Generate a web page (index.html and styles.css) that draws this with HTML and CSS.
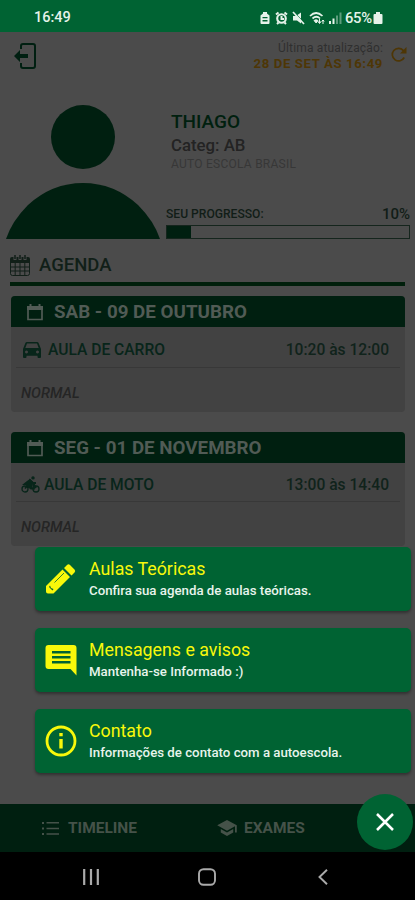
FILE: index.html
```html
<!DOCTYPE html>
<html lang="pt-BR">
<head>
<meta charset="utf-8">
<meta name="viewport" content="width=device-width, initial-scale=1">
<title>Agenda</title>
<link rel="stylesheet" href="styles.css">
</head>
<body>
<div class="phone">
  <div class="status">
    <span class="clock">16:49</span>
    <div class="status-icons">
      <svg width="12" height="14" viewBox="0 0 12 14"><path fill="currentColor" fill-rule="evenodd" d="M4 1h4v1.500l2.500 2V12q0 1-1 1h-7q-1 0-1-1V4.500L4 2.500zM3.500 6v1.300h5V6zm0 3v1.500h5V9z"/></svg>
      <svg width="13" height="14" viewBox="0 0 13 14"><circle cx="6.500" cy="7.500" r="4.300" fill="none" stroke="currentColor" stroke-width="2.100"/><path d="M1 3.500 3.500 1.500M12 3.500 9.500 1.500M2 13l1.500-1.500M11 13l-1.500-1.500M6.500 5v3H9" fill="none" stroke="currentColor" stroke-width="2"/></svg>
      <svg width="13" height="14" viewBox="0 0 13 14"><path fill="currentColor" d="M1 5h3l5-3.500v11L5 9.500H1z"/><path d="m2.500 1.500 10.500 11" stroke="#006333" stroke-width="1"/><path d="m1 1 11 12" stroke="currentColor" stroke-width="1.700"/></svg>
      <svg width="16" height="14" viewBox="0 0 16 14"><path d="M1 5q6-6 12.500 0M3.500 7.500q4-3.500 7.500 0" fill="none" stroke="currentColor" stroke-width="1.700"/><path d="M5 9.500q2-1.500 4 0L7.200 12zM10.500 8v4M9 10.500l1.500 2 1.500-2M14 13V9m-1.300 1.300L14 9l1.300 1.300" fill="currentColor" stroke="currentColor"/></svg>
      <svg width="13" height="14" viewBox="0 0 13 14"><path fill="currentColor" d="M0 10h2v3H0zM3.500 7.500h2V13h-2z"/><path fill="currentColor" opacity=".4" d="M7 4.500h2V13H7zM10.500 1.500h2V13h-2z"/></svg>
      <span class="battery-text">65%</span>
      <svg width="10" height="14" viewBox="0 0 10 14"><path fill="currentColor" d="M3 1h4v2h1.500q1 0 1 1v8q0 1-1 1h-7q-1 0-1-1V4q0-1 1-1H3z"/></svg>
    </div>
  </div>

  <main class="screen">
    <header class="top">
      <svg class="logout" width="24" height="28" viewBox="0 0 24 28"><path d="M7 7V4q0-2 2-2h10q2 0 2 2v20q0 2-2 2H9q-2 0-2-2v-3" fill="none" stroke="currentColor" stroke-width="2"/><path fill="currentColor" d="m0 14 6-6v4h8v4H6v4z"/></svg>
      <div class="update">
        <span class="update-label">Última atualização:</span>
        <span class="update-date">28 DE SET ÀS 16:49</span>
      </div>
      <svg class="refresh" width="18" height="18" viewBox="0 0 18 18"><path d="M14.200 11.500A6.300 6.300 0 1 1 13.200 4.300L15 6" fill="none" stroke="currentColor" stroke-width="1.700"/><path fill="currentColor" d="M16.500 1v6.500H10z"/></svg>
    </header>

    <section class="profile">
      <svg class="avatar" width="154" height="136" viewBox="0 0 154 136"><circle cx="77" cy="33" r="32" fill="currentColor"/><path fill="currentColor" d="M0 135Q6 117 22 101 46 79 77 79t55 22q16 16 22 34z"/></svg>
      <div class="info">
        <div class="identity">
          <h1 class="name">THIAGO</h1>
          <p class="category">Categ: AB</p>
          <p class="school">AUTO ESCOLA BRASIL</p>
        </div>
        <div class="progress-head"><span class="progress-label">SEU PROGRESSO:</span><span class="progress-value">10%</span></div>
        <div class="progress"><div class="progress-fill" style="width:10%"></div></div>
      </div>
    </section>

    <h2 class="agenda">
      <svg width="20" height="21" viewBox="0 0 20 21"><path fill="currentColor" d="M2 2h16q2 0 2 2v4H0V4q0-2 2-2z"/><path d="M.5 7v11.500q0 2 2 2h15q2 0 2-2V7M.5 12h19M.5 16h19M5.200 8v12M10 8v12M14.800 8v12" fill="none" stroke="currentColor"/><path d="M5 1v4M10 1v4M15 1v4" stroke="#4b4b4b" stroke-width="3"/><path d="M5 0v4M10 0v4M15 0v4" stroke="currentColor" stroke-width="1.500"/></svg>
      <span>AGENDA</span>
    </h2>

    <article class="lesson">
      <h3 class="lesson-date">
        <svg width="16" height="18" viewBox="0 0 16 18"><path d="M1 4h14v12.500H1z" fill="none" stroke="currentColor" stroke-width="1.700"/><path fill="currentColor" d="M0 3h16v4H0zM2.500 1h2v3h-2zM11.500 1h2v3h-2z"/></svg>
        <span>SAB - 09 DE OUTUBRO</span>
      </h3>
      <div class="lesson-row">
        <svg class="car" width="18" height="16" viewBox="0 0 18 16"><path fill="currentColor" fill-rule="evenodd" d="M4 0h10q1.300 0 1.700 1.200L18 7v8q0 1-1 1h-1.500q-1 0-1-1v-1.300h-11V15q0 1-1 1H1q-1 0-1-1V7l2.300-5.800Q2.700 0 4 0zm0 1.500L2.300 6h13.400L14 1.500zM3.500 8.500a1.500 1.500 0 1 0 .01 0zm11 0a1.500 1.500 0 1 0 .01 0z"/></svg>
        <span class="lesson-name">AULA DE CARRO</span>
        <span class="lesson-time">10:20 às 12:00</span>
      </div>
      <p class="lesson-type">NORMAL</p>
    </article>

    <article class="lesson second">
      <h3 class="lesson-date">
        <svg width="16" height="18" viewBox="0 0 16 18"><path d="M1 4h14v12.500H1z" fill="none" stroke="currentColor" stroke-width="1.700"/><path fill="currentColor" d="M0 3h16v4H0zM2.500 1h2v3h-2zM11.500 1h2v3h-2z"/></svg>
        <span>SEG - 01 DE NOVEMBRO</span>
      </h3>
      <div class="lesson-row">
        <svg class="moto" width="19" height="17" viewBox="0 0 19 17"><g fill="none" stroke="currentColor"><circle cx="4" cy="13" r="3" stroke-width="1.300"/><circle cx="15" cy="13" r="3" stroke-width="1.300"/><path d="M4 12.500 7 9l3 3.500h3L12 7l3 5M7 9l2-5 3 3h3" stroke-width="1.800"/></g><circle cx="12" cy="1.900" r="1.700" fill="currentColor"/><path fill="currentColor" d="M1 9l5-4 3-2 3 3-1 7-4-1-2-3z"/></svg>
        <span class="lesson-name">AULA DE MOTO</span>
        <span class="lesson-time">13:00 às 14:40</span>
      </div>
      <p class="lesson-type">NORMAL</p>
    </article>
  </main>

  <nav class="tabs">
    <div class="tab timeline">
      <svg width="17" height="13" viewBox="0 0 17 13"><path fill="currentColor" d="M0 0h2v2H0zM4.500 0H17v1.500H4.500zM0 5.500h2v2H0zM4.500 5.700H17v1.500H4.500zM0 11h2v2H0zM4.500 11.300H17v1.500H4.500z"/></svg>
      <span>TIMELINE</span>
    </div>
    <div class="tab exams">
      <svg width="20" height="16" viewBox="0 0 22 18"><path fill="currentColor" d="M4 10.180v4L11 18l7-3.820v-4L11 14zM11 0 0 6l11 6 9-4.910V14h2V6z"/></svg>
      <span>EXAMES</span>
    </div>
  </nav>

  <div class="system-nav">
    <svg width="16" height="16" viewBox="0 0 16 16"><path d="M1.200 0v16M8 0v16M14.800 0v16" stroke="currentColor" stroke-width="2.200"/></svg>
    <svg class="home" width="18" height="18" viewBox="0 0 18 18"><rect x="1" y="1.200" width="16" height="15.600" rx="4.500" fill="none" stroke="currentColor" stroke-width="1.900"/></svg>
    <svg width="10" height="16" viewBox="0 0 10 16"><path d="M9 .8 1.500 8 9 15.200" fill="none" stroke="currentColor" stroke-width="1.900"/></svg>
  </div>

  <div class="menu">
    <a class="option">
      <svg width="32" height="32" viewBox="0 0 32 32"><path fill="currentColor" d="M1 23 17.500 6.500l7.500 7.500L8.500 30.500H3q-2 0-2-2zM19 5l3-3q1.500-1.500 3 0l4.500 4.500q1.500 1.500 0 3l-3 3z"/><path d="m9.500 19.500 9.500-9.500" stroke="#006333" stroke-width=".8"/><path fill="#006333" d="m5 22.500 1 2.500 2.500 1-1 1.500L4 24z"/></svg>
      <div class="option-text"><strong>Aulas Teóricas</strong><span>Confira sua agenda de aulas teóricas.</span></div>
    </a>
    <a class="option">
      <svg width="32" height="32" viewBox="0 0 32 32"><path fill="currentColor" fill-rule="evenodd" d="M3.500 1h25q3 0 3 3v27.500L25.500 25h-22q-3 0-3-3V4q0-3 3-3zM7 7v2.500h18.500V7zm0 5v2.500h18.500V12zm0 5v2.500h18.500V17z"/></svg>
      <div class="option-text"><strong>Mensagens e avisos</strong><span>Mantenha-se Informado :)</span></div>
    </a>
    <a class="option">
      <svg width="32" height="32" viewBox="0 0 32 32"><circle cx="16" cy="16" r="14" fill="none" stroke="currentColor" stroke-width="2.800"/><path fill="currentColor" d="M14.300 8h3.400v3.200h-3.400zM14.300 14h3.400v9.500h-3.400z"/></svg>
      <div class="option-text"><strong>Contato</strong><span>Informações de contato com a autoescola.</span></div>
    </a>
  </div>
  <button class="fab" aria-label="Fechar"><svg width="18" height="18" viewBox="0 0 18 18"><path d="m1 1 16 16M17 1 1 17" stroke="currentColor" stroke-width="2.500"/></svg></button>
</div>
</body>
</html>
```
FILE: styles.css
```css
* { box-sizing: border-box; margin: 0; padding: 0; }
body { font-family: Roboto, "Liberation Sans", sans-serif; background: #4b4b4b; }
svg { display: block; flex: none; }
span, strong { white-space: nowrap; }
.phone { position: relative; width: 415px; height: 900px; overflow: hidden; display: flex; flex-direction: column; background: #4b4b4b; }

.status { height: 32px; flex: none; display: flex; align-items: center; justify-content: space-between; padding: 3px 32px 0 34px; background: #006333; color: #e6f3ea; }
.clock { font-size: 14.5px; font-weight: 500; }
.status-icons { display: flex; align-items: center; gap: 4px; }
.battery-text { font-size: 14.8px; font-weight: 500; letter-spacing: -0.2px; margin: 0 -3px 0 -1px; }

.screen { flex: 1; min-height: 0; overflow: hidden; }
.top { height: 65px; display: flex; align-items: flex-start; padding: 10px 7px 0 14px; }
.logout { color: #001f11; }
.update { margin-left: auto; display: flex; flex-direction: column; align-items: flex-end; color: #2f2f2f; }
.update-label { font-size: 12px; line-height: 13px; letter-spacing: .15px; }
.update-date { font-size: 13.2px; line-height: 17px; font-weight: 700; letter-spacing: .6px; color: #4e3605; }
.refresh { margin: 4px 0 0 7px; color: #4e3605; }

.profile { height: 143px; display: flex; padding: 7px 5px 0 6px; gap: 6px; }
.avatar { color: #001f10; }
.info { flex: 1; display: flex; flex-direction: column; }
.identity { height: 101px; padding: 6px 0 0 5px; }
.name { font-size: 19px; line-height: 24px; font-weight: 500; color: #00200f; }
.category { font-size: 16.8px; line-height: 23px; font-weight: 500; color: #232323; }
.school { font-size: 12px; line-height: 14px; color: #373737; letter-spacing: .25px; }
.progress-head { height: 20px; padding-bottom: 3px; display: flex; justify-content: space-between; align-items: center; color: #111d17; font-weight: 500; }
.progress-label { font-size: 12.1px; }
.progress-value { font-size: 15px; }
.progress { height: 14px; border: 1px solid #15251d; }
.progress-fill { height: 100%; background: #001f10; }

.agenda { height: 46px; margin: 0 10px; padding-top: 8px; border-bottom: 4px solid #001f0b; display: flex; align-items: center; gap: 9px; font-size: 18.5px; font-weight: 500; color: #111f18; }
.lesson { height: 116px; margin: 10px 10px 0 11px; border-radius: 4px; background: #424242; overflow: hidden; }
.second { height: 114px; margin-top: 20px; }
.lesson-date { height: 31px; display: flex; align-items: center; gap: 11px; padding-left: 16px; background: #001f10; color: #515b55; font-size: 18.8px; font-weight: 700; }
.lesson-row { height: 41px; margin: 0 5px; padding: 5px 11px 0 7px; border-bottom: 1px solid #383838; display: flex; align-items: center; color: #08251a; font-size: 15.6px; font-weight: 500; }
.second .lesson-row { height: 39px; }
.car { margin-right: 7px; }
.moto { margin: 0 4px 0 -2px; }
.lesson-time { margin-left: auto; color: #10231b; }
.lesson-type { padding: 17px 0 0 10px; font-size: 14.7px; line-height: 17px; font-style: italic; font-weight: 500; color: #252525; }

.tabs { height: 48px; flex: none; display: flex; background: #001f10; color: #455249; font-size: 15.5px; font-weight: 700; }
.tab { display: flex; align-items: center; gap: 9px; }
.timeline { width: 176px; padding-left: 42px; }
.exams { padding-left: 41px; gap: 7px; }

.system-nav { height: 48px; flex: none; display: flex; align-items: center; justify-content: space-between; padding: 1px 87px 0 83px; background: #000; color: #aaa; }
.home { margin-right: 3px; }

.menu { position: absolute; left: 35px; right: 4px; top: 547px; display: flex; flex-direction: column; gap: 17px; }
.option { height: 64px; display: flex; align-items: center; gap: 12px; padding-left: 10px; border-radius: 5px; background: #006333; color: #f8f80b; box-shadow: 0 2px 3px rgba(0, 0, 0, .35); }
.option-text { display: flex; flex-direction: column; padding-top: 1px; }
.option-text strong { font-size: 17.8px; line-height: 22px; font-weight: 400; }
.option-text span { font-size: 13.25px; line-height: 21px; font-weight: 500; color: #e8f4ec; }
.fab { position: absolute; left: 357px; top: 794px; width: 56px; height: 56px; border: 0; border-radius: 50%; display: flex; align-items: center; justify-content: center; background: #006333; color: #fff; }
```
